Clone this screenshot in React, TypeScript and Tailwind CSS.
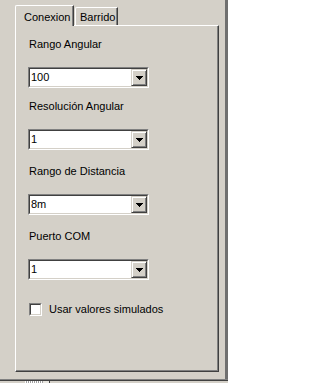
import { useState } from "react";

const face = "bg-[#d4d0c8]";

interface ComboProps {
  value: string;
}

function Combo({ value }: ComboProps) {
  return (
    <div className="w-[121px] h-[21px] border border-t-[#808080] border-l-[#808080] border-r-white border-b-white">
      <div className="flex h-full border border-t-[#404040] border-l-[#404040] border-r-[#d4d0c8] border-b-[#d4d0c8] bg-white">
        <span className="flex-1 pl-[1px] leading-[17px]">{value}</span>
        <div className={`w-[16px] h-[17px] flex items-center justify-center border border-t-[#d4d0c8] border-l-[#d4d0c8] border-r-[#404040] border-b-[#404040] shadow-[inset_1px_1px_0_#ffffff,inset_-1px_-1px_0_#808080] ${face}`}>
          <svg width="7" height="4" viewBox="0 0 7 4" className="block">
            <polygon points="0,0 7,0 3.5,4" fill="#000000" shapeRendering="crispEdges" />
          </svg>
        </div>
      </div>
    </div>
  );
}

function Field({ label, value, gap }: { label: string; value: string; gap: string }) {
  return (
    <div className={gap}>
      <div className="h-[13px] leading-[13px] pl-[1px] mb-[16px]">{label}</div>
      <Combo value={value} />
    </div>
  );
}

export default function App() {
  const [tab, setTab] = useState(0);
  const [simulated, setSimulated] = useState(false);

  return (
    <div className={`w-[228px] h-[383px] overflow-hidden flex flex-col text-[11px] text-black [font-family:'Liberation_Sans',Arial,sans-serif] ${face}`}>
      <div className="flex h-[379px]">
        <div className="w-[225px] pl-[15px] pt-[5px]">
          <div className="flex items-end gap-[1px] h-[20px]">
            <button
              onClick={() => setTab(0)}
              className={`relative z-10 w-[59px] h-[21px] -mb-px text-left pl-[8px] pt-[2px] leading-[13px] border-l border-t border-l-white border-t-white border-r border-r-[#404040] rounded-tl-[2px] shadow-[inset_-1px_0_0_#808080] ${face}`}
            >
              Conexion
            </button>
            <button
              onClick={() => setTab(1)}
              className={`w-[43px] h-[18px] text-left pl-[4px] pt-[1px] leading-[13px] border-l border-t border-l-white border-t-white border-r border-r-[#404040] rounded-tl-[2px] shadow-[inset_-1px_0_0_#808080] ${face}`}
            >
              Barrido
            </button>
          </div>
          <div className="w-[204px] h-[347px] border-l border-t border-l-white border-t-white border-r border-b border-r-[#404040] border-b-[#404040] shadow-[inset_-1px_-1px_0_#808080] pl-[12px] pt-[12px]">
            {tab === 0 && (
              <>
                <Field label="Rango Angular" value="100" gap="" />
                <Field label="Resolución Angular" value="1" gap="mt-[12px]" />
                <Field label="Rango de Distancia" value="8m" gap="mt-[15px]" />
                <Field label="Puerto COM" value="1" gap="mt-[15px]" />
                <label className="mt-[23px] flex items-center h-[13px] pl-[1px]">
                  <span
                    onClick={() => setSimulated(!simulated)}
                    className="w-[13px] h-[13px] border border-t-[#808080] border-l-[#808080] border-r-white border-b-white"
                  >
                    <span className="block w-full h-full bg-white border border-t-[#404040] border-l-[#404040] border-r-[#d4d0c8] border-b-[#d4d0c8]">
                      {simulated && (
                        <svg width="9" height="9" viewBox="0 0 9 9" className="block">
                          <path d="M1 4l2 2 4-4" stroke="#000" strokeWidth="1.5" fill="none" />
                        </svg>
                      )}
                    </span>
                  </span>
                  <span className="ml-[7px] leading-[13px]">Usar valores simulados</span>
                </label>
              </>
            )}
          </div>
        </div>
        <div className="w-[3px] bg-[#6f6f6f]" />
      </div>
      <div className="h-px bg-[#808080]" />
      <div className="h-px bg-[#404040]" />
      <div className="flex h-[2px]">
        <div className="ml-[25px] w-[18px] bg-[repeating-linear-gradient(90deg,#ffffff_0_1px,#a0a0a0_1px_2px)]" />
        <div className="w-[6px] bg-[#e8e6e0]" />
        <div className="w-px bg-[#404040]" />
      </div>
    </div>
  );
}
